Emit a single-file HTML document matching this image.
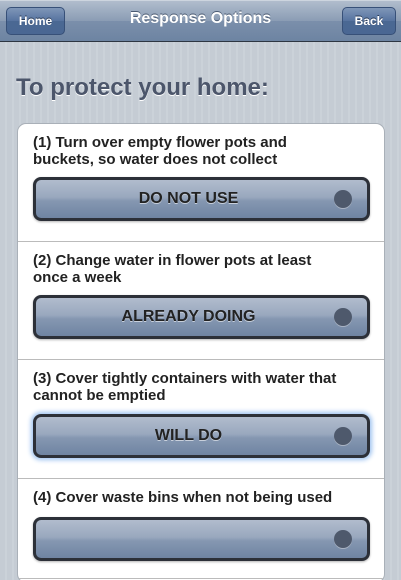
<!DOCTYPE html>
<html><head><style>
*{margin:0;padding:0;box-sizing:border-box}
html,body{width:401px;height:580px;overflow:hidden}
body{font-family:"Liberation Sans",sans-serif;font-weight:bold;
background:repeating-linear-gradient(90deg,#c5ccd4 0,#c5ccd4 5px,#cbd2d9 5px,#cbd2d9 7px);position:relative}
.hdr{position:absolute;left:0;top:0;width:401px;height:42px;background:linear-gradient(#b1bdcd,#8a9cb4 50%,#7b8fab 50%,#6d84a2);border-bottom:1px solid #2d3642;border-top:1px solid #cdd5df}
.hdr h1{position:absolute;left:0;right:0;top:9px;text-align:center;color:#fff;font-size:16px;text-shadow:0 -1px 0 #4a5a72}
.nb{position:absolute;top:6px;height:28px;border:1px solid #375078;border-radius:5px;background:linear-gradient(#7f96b8,#56739f 50%,#4a6893 50%,#4a6793);color:#fff;font-size:12px;text-align:center;line-height:26px;text-shadow:0 -1px 0 #2a3a55}
h2{position:absolute;left:16px;top:74px;font-size:24px;color:#4c566b;text-shadow:0 1px 0 #fff}
.card{position:absolute;left:17px;top:123px;width:368px;height:460px;background:#fff;border:1px solid #a9b0b8;border-radius:9px;overflow:hidden}
.it{position:absolute;left:0;width:368px;border-bottom:1px solid #bbb}
.it p{position:absolute;left:15px;top:10px;font-size:15px;line-height:17px;color:#222}
.b{position:absolute;left:15px;width:337px;height:44px;border:3px solid #2c3038;border-radius:8px;background:linear-gradient(#b1bccd,#99a8be 45%,#8597b1 55%,#6f84a2);text-align:center;padding-right:26px;line-height:38px;font-size:16px;color:#222;text-shadow:0 1px 0 #c8d0dc;box-shadow:0 1px 2px rgba(0,0,0,.3)}
.b i{position:absolute;right:15px;top:10px;width:18px;height:18px;border-radius:50%;background:#4e596c;box-shadow:0 1px 0 #aab4c4}
.glow{box-shadow:0 0 5px 2px #9ec3f0}
</style></head><body>
<div class="hdr"><div class="nb" style="left:6px;width:59px">Home</div><h1>Response Options</h1><div class="nb" style="left:342px;width:54px">Back</div></div>
<h2>To protect your home:</h2>
<div class="card">
<div class="it" style="top:0;height:118px"><p>(1) Turn over empty flower pots and<br>buckets, so water does not collect</p><div class="b" style="top:53px">DO NOT USE<i></i></div></div>
<div class="it" style="top:118px;height:118px"><p>(2) Change water in flower pots at least<br>once a week</p><div class="b" style="top:53px">ALREADY DOING<i></i></div></div>
<div class="it" style="top:236px;height:119px"><p>(3) Cover tightly containers with water that<br>cannot be emptied</p><div class="b glow" style="top:54px">WILL DO<i></i></div></div>
<div class="it" style="top:355px;height:100px"><p>(4) Cover waste bins when not being used</p><div class="b" style="top:38px"><i></i></div></div>
</div>
</body></html>
